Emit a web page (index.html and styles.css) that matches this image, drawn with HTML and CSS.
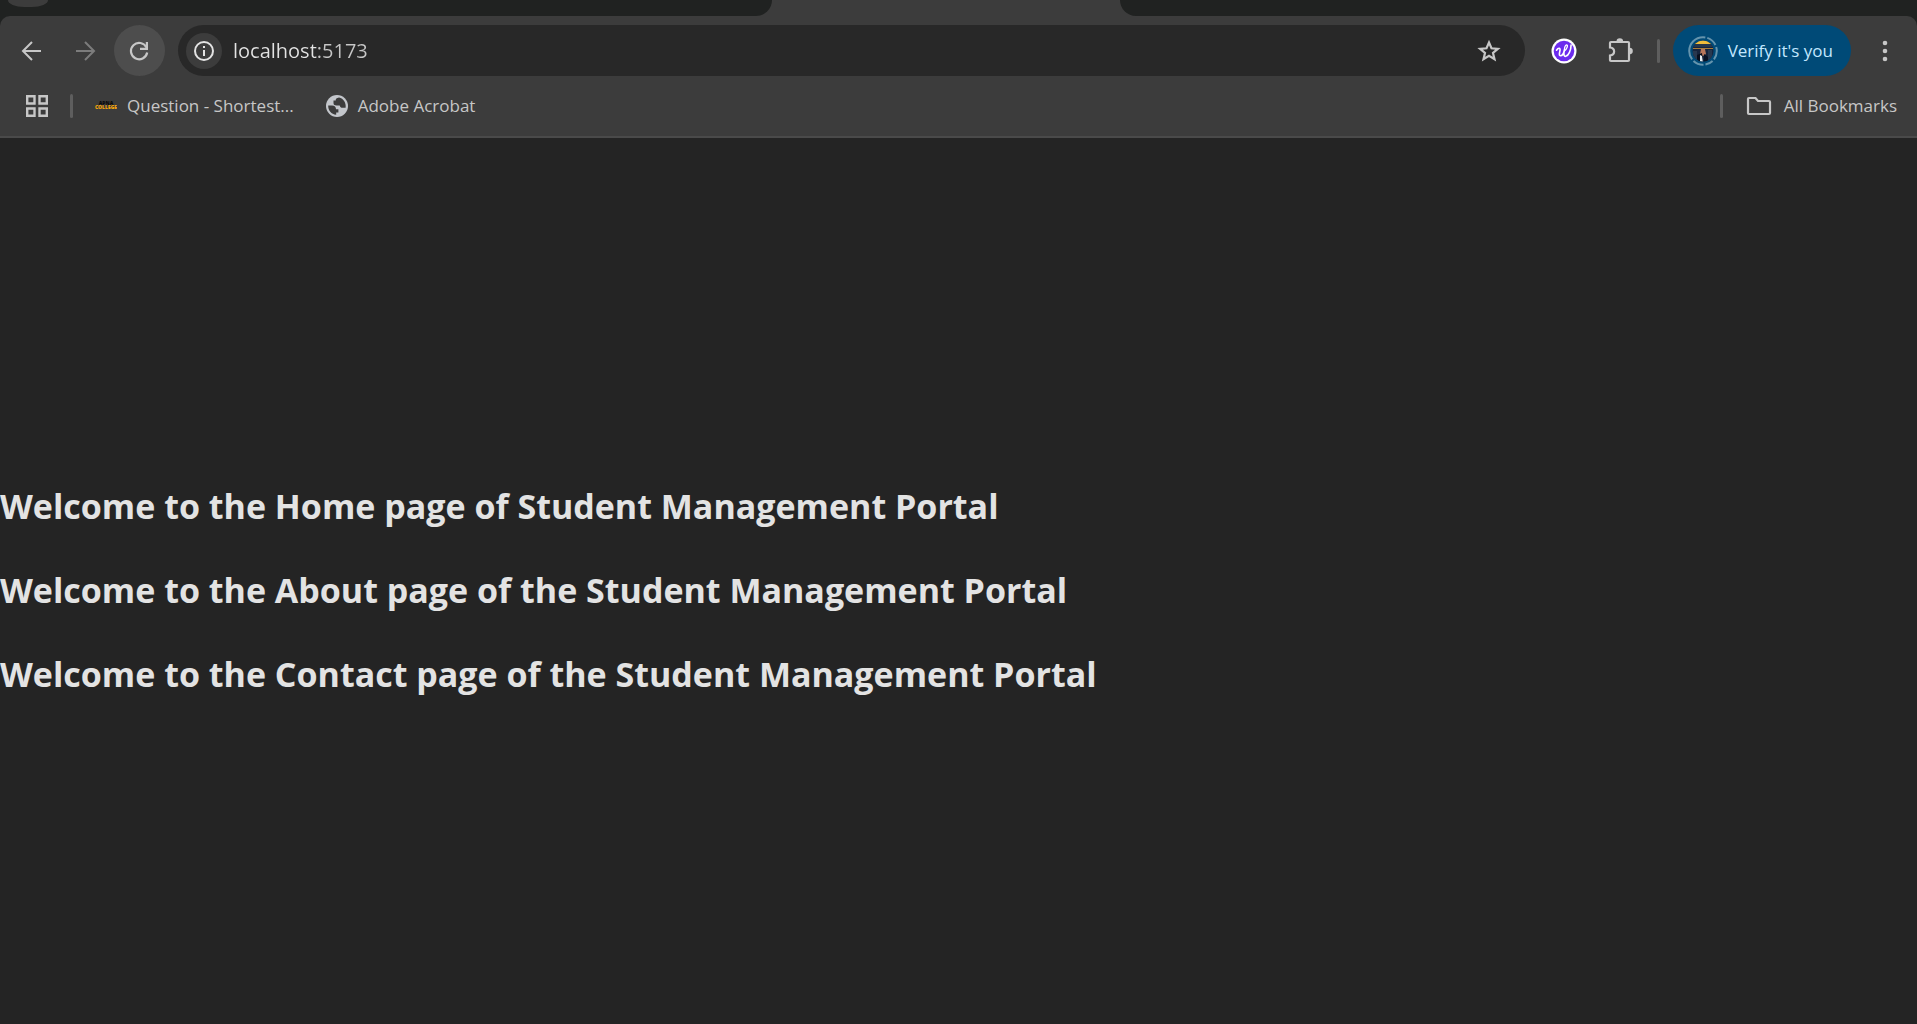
FILE: index.html
```html
<!DOCTYPE html>
<html lang="en">
<head>
<meta charset="utf-8">
<meta name="viewport" content="width=device-width, initial-scale=1">
<title>Student Management Portal</title>
<link rel="stylesheet" href="styles.css">
</head>
<body>
<header class="browser">
  <div class="tabstrip">
    <div class="tab-search"></div>
    <div class="tabs-left"></div>
    <div class="tab-active"></div>
    <div class="tabs-right"></div>
  </div>
  <div class="chrome">
    <div class="toolbar">
      <div class="nav">
        <button class="round" aria-label="Back"><svg width="28" height="28" viewBox="0 0 28 28"><path d="M23 14H6M14 5l-9 9 9 9" fill="none" stroke="currentColor" stroke-width="2"/></svg></button>
        <button class="round dim" aria-label="Forward"><svg width="28" height="28" viewBox="0 0 28 28"><path d="M4 14h17M13 5l9 9-9 9" fill="none" stroke="currentColor" stroke-width="2"/></svg></button>
        <button class="round active" aria-label="Reload"><svg width="28" height="28" viewBox="0 0 28 28"><path d="M20.500 10.500A8.200 8.200 0 1 0 21.200 15.500" fill="none" stroke="currentColor" stroke-width="2.200"/><path d="M22 5v8H14v-2.200h5.800V5z" fill="currentColor"/></svg></button>
      </div>
      <div class="omnibox">
        <button class="info" aria-label="View site information"><svg width="22" height="22" viewBox="0 0 22 22"><circle cx="11" cy="11" r="9" fill="none" stroke="currentColor" stroke-width="2"/><path d="M10 10h2v6h-2zM10 6h2v2h-2z" fill="currentColor"/></svg></button>
        <input class="url" type="text" value="localhost:5173" aria-label="Address">
        <button class="star" aria-label="Bookmark this tab"><svg width="28" height="28" viewBox="0 0 28 28"><path d="M14 5.500l2.500 5.800 6.400.5-4.900 4.200 1.500 6.200L14 18.900l-5.500 3.300L10 16l-4.900-4.200 6.400-.5z" fill="none" stroke="currentColor" stroke-width="2.200"/></svg></button>
      </div>
      <button class="tool" aria-label="Extension"><svg width="26" height="26" viewBox="0 0 26 26"><circle cx="13" cy="13" r="12.500" fill="#fff"/><circle cx="13" cy="13" r="10.300" fill="#6c2bee"/><path d="M5.500 12.200c1.800-2.700 4-2.500 3.500.2-.6 2.800-1.200 5.500.6 5.400 2-.1 3.200-2.800 3.800-5.800-.8 3.300-.8 6.700 1.400 6.300 2.800-.6 5.200-6 5.300-11.300" fill="none" stroke="#fff" stroke-width="1.600" stroke-linecap="round"/><path d="M13.400 11.500c.2-2.600 1-4.700 2.300-4.600 1.600.3.300 4-2.300 6.200" fill="none" stroke="#fff" stroke-width="1.300" stroke-linecap="round"/></svg></button>
      <button class="tool puzzle" aria-label="Extensions"><svg width="28" height="28" viewBox="0 0 28 28"><path d="M5 5h17a1 1 0 0 1 1 1v17a1 1 0 0 1-1 1H5a1 1 0 0 1-1-1v-4.500c5.500-.7 5.500-7.300 0-8V6a1 1 0 0 1 1-1z" fill="none" stroke="currentColor" stroke-width="2.200"/><path d="M10.500 4.500a3.300 3.300 0 0 1 6.600 0zM23.500 10.800a3.300 3.300 0 0 1 0 6.600z" fill="currentColor"/></svg></button>
      <span class="divider"></span>
      <button class="profile"><svg width="30" height="30" viewBox="0 0 30 30"><defs><clipPath id="face"><circle cx="15" cy="15" r="10.500"/></clipPath></defs><g clip-path="url(#face)"><path d="M0 0h30v30H0z" fill="#17243d"/><path d="M3 8c3-5 21-5 24 0H3z" fill="#f0bd3b"/><path d="M4 8h22v3H4z" fill="#26364b"/><path d="M4 12h22v1H4z" fill="#a87d3a"/><path d="M5 15h4v9H5zM20 14h4v10h-4z" fill="#28384f"/><path d="M13 13h4l1 5-3 2-3-2z" fill="#b8765b"/><path d="M9 19l5-2 1 10H9z" fill="#080e1d"/><path d="M12 19l2 1 1 7h-3z" fill="#e8edf2"/><path d="M16 18l4 3v6h-4z" fill="#091224"/></g><circle cx="15" cy="15" r="13.800" fill="none" stroke="#6594ad" stroke-width="2" stroke-dasharray="9 2 8 2 11 2 33 2 11 2"/></svg><span>Verify it's you</span></button>
      <button class="menu" aria-label="Menu"><svg width="10" height="28" viewBox="0 0 10 28"><g fill="currentColor"><circle cx="5" cy="6" r="2.300"/><circle cx="5" cy="14" r="2.300"/><circle cx="5" cy="22" r="2.300"/></g></svg></button>
    </div>
    <nav class="bookmarks" aria-label="Bookmarks">
      <button class="apps" aria-label="Apps"><svg width="22" height="22" viewBox="0 0 22 22"><path d="M1.200 1.200h7.300v7.300H1.200zM13.500 1.200h7.300v7.300h-7.300zM1.200 13.500h7.300v7.300H1.200zM13.500 13.500h7.300v7.300h-7.300z" fill="none" stroke="currentColor" stroke-width="2.400"/></svg></button>
      <span class="divider"></span>
      <a class="bookmark first" href="#question"><svg class="logo" width="22" height="22" viewBox="0 0 22 22"><text x="11" y="10" text-anchor="middle" fill="#0b0b0b">APNA</text><text x="11" y="14" text-anchor="middle" fill="#f5a60b">COLLEGE</text></svg><span>Question - Shortest...</span></a>
      <a class="bookmark" href="#acrobat"><svg width="22" height="22" viewBox="0 0 22 22"><circle cx="11" cy="11" r="11" fill="#c3c6cb"/><path d="M13 2.400c-2.400.3-3.500 1.500-3.300 3.100H7.500v2.800c0 1.500 1.400 2.200 3 2.200h3.200c.4 1.700 1.200 2.300 2.800 2.300h3.100c.8-4.800-2-9.400-6.600-10.400zM2.200 10.500c-.2 5 3.200 8.800 8 9.300v-2.400h2.200v-3.200H10c0-2-1.400-3.700-4-3.700z" fill="#3c3c3c"/></svg><span>Adobe Acrobat</span></a>
      <span class="divider last"></span>
      <button class="bookmark all"><svg width="26" height="20" viewBox="0 0 26 20"><path d="M3 2h6.500l2.500 3h11a1 1 0 0 1 1 1v11a1 1 0 0 1-1 1H3a1 1 0 0 1-1-1V3a1 1 0 0 1 1-1z" fill="none" stroke="currentColor" stroke-width="2.200"/></svg><span>All Bookmarks</span></button>
    </nav>
  </div>
</header>
<main class="page">
  <h1>Welcome to the Home page of Student Management Portal</h1>
  <h1>Welcome to the About page of the Student Management Portal</h1>
  <h1>Welcome to the Contact page of the Student Management Portal</h1>
</main>
</body>
</html>
```

FILE: styles.css
```css
* { box-sizing: border-box; }

body {
  margin: 0;
  min-height: 100vh;
  background: #242424;
  color: #e3e3e3;
  font-family: "Open Sans", "Noto Sans", sans-serif;
}

button, input {
  margin: 0;
  padding: 0;
  border: 0;
  background: none;
  color: inherit;
  font: inherit;
}

button {
  display: flex;
  align-items: center;
  justify-content: center;
  flex: none;
}

svg { display: block; flex: none; }

.browser { background: #202221; color: #c7c7c7; }

.tabstrip { display: flex; height: 16px; background: #3c3c3c; }
.tabs-left, .tabs-right, .tab-search { background: #202221; }
.tab-search { width: 56px; padding-left: 8px; }
.tab-search::before {
  content: "";
  display: block;
  height: 7px;
  width: 40px;
  border-radius: 0 0 16px 16px / 0 0 7px 7px;
  background: #3c3c3c;
}
.tabs-left { flex: 716 1 0; border-bottom-right-radius: 16px; }
.tab-active { flex: 348 1 0; }
.tabs-right { flex: 797 1 0; border-bottom-left-radius: 16px; }

.chrome {
  background: #3c3c3c;
  border-radius: 10px 10px 0 0;
  border-bottom: 2px solid #4a4a4a;
}

.toolbar {
  display: flex;
  align-items: center;
  height: 69px;
  padding: 0 27px 0 6px;
}

.nav { display: flex; gap: 3px; }
.round { width: 51px; height: 51px; border-radius: 50%; }
.dim { color: #7c7c7c; }
.active { background: #4d4d4d; }

.omnibox {
  display: flex;
  align-items: center;
  flex: 1;
  height: 51px;
  margin: 0 25px 0 13px;
  padding: 0 22px 0 8px;
  border-radius: 26px;
  background: #282828;
}
.info {
  width: 36px;
  height: 36px;
  border-radius: 50%;
  background: #3c3c3c;
  color: #e3e3e3;
}
.url {
  flex: 1;
  min-width: 0;
  margin-left: 11px;
  font-size: 20px;
  background: linear-gradient(90deg, #e3e3e3 84px, #c7c7c7 84px);
  background-clip: text;
  color: transparent;
  outline: none;
}

.tool { width: 28px; margin-right: 28px; }
.puzzle { margin-right: 23px; }

.divider {
  flex: none;
  width: 3px;
  height: 24px;
  border-radius: 2px;
  background: #5e5e5e;
}

.profile {
  gap: 10px;
  height: 51px;
  margin-left: 13px;
  padding: 0 18px 0 15px;
  border-radius: 26px;
  background: #004a77;
  color: #c2e7ff;
  font-size: 17px;
}
.menu { margin-left: 29px; }

.bookmarks {
  display: flex;
  align-items: center;
  height: 51px;
  margin-top: -5px;
  margin-bottom: 5px;
  padding: 0 20px 0 26px;
  font-size: 17px;
}
.apps { margin-right: 22px; }
.bookmark {
  display: flex;
  align-items: center;
  gap: 10px;
  margin-left: 32px;
  color: inherit;
  text-decoration: none;
  white-space: nowrap;
}
.first { margin-left: 22px; }
.logo { font-size: 5px; font-weight: 800; }
.last { margin-left: auto; }
.all { margin-left: 23px; gap: 12px; }

.page {
  display: flex;
  flex-direction: column;
  gap: 28px;
  padding-top: 340px;
}
h1 {
  margin: 0;
  font-size: 34px;
  line-height: 56px;
  font-weight: 700;
}
```
